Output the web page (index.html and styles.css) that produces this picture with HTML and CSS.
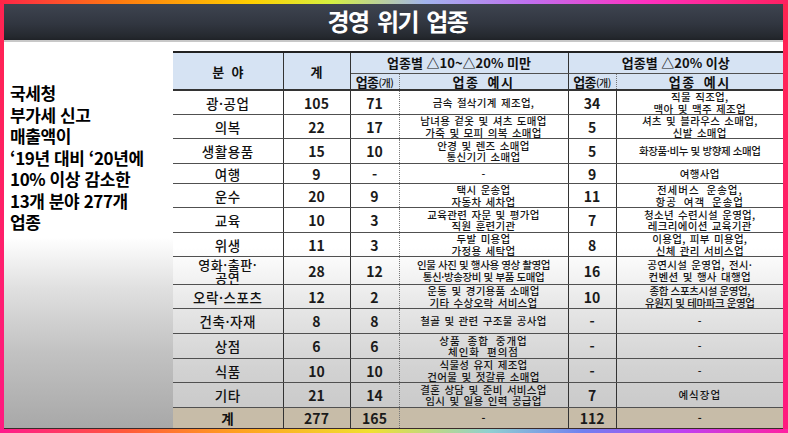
FILE: index.html
```html
<!DOCTYPE html>
<html lang="ko">
<head>
<meta charset="utf-8">
<title>경영 위기 업종</title>
<link rel="stylesheet" href="styles.css">
</head>
<body>
<div class="frame">
  <div class="screen">
    <header class="titlebar"><h1 class="title">경영 위기 업종</h1></header>
    <main class="content">
      <aside class="summary">
        <p>국세청<br>부가세 신고<br>매출액이<br>‘19년 대비 ‘20년에<br>10% 이상 감소한<br>13개 분야 277개<br>업종</p>
      </aside>
      <table class="grid">
        <colgroup>
          <col class="w-field"><col class="w-sum"><col class="w-cnt1"><col class="w-ex1"><col class="w-cnt2"><col class="w-ex2">
        </colgroup>
        <thead>
          <tr class="h1">
            <th rowspan="2" class="hb">분&nbsp;&nbsp;야</th>
            <th rowspan="2" class="hb">계</th>
            <th colspan="2">업종별 △10~△20% 미만</th>
            <th colspan="2" class="last">업종별 △20% 이상</th>
          </tr>
          <tr class="h2">
            <th class="cnt hb">업종<small>(개)</small></th>
            <th class="hb spaced">업종 예시</th>
            <th class="cnt hb">업종<small>(개)</small></th>
            <th class="hb spaced last">업종 예시</th>
          </tr>
        </thead>
        <tbody>
          <tr><td class="field">광·공업</td><td class="num">105</td><td class="num cnt">71</td><td class="ex">금속 절삭기계 제조업,</td><td class="num">34</td><td class="ex last">직물 직조업,<br>맥아 및 맥주 제조업</td></tr>
          <tr><td class="field">의복</td><td class="num">22</td><td class="num cnt">17</td><td class="ex">남녀용 겉옷 및 셔츠 도매업<br>가죽 및 모피 의복 소매업</td><td class="num">5</td><td class="ex last">셔츠 및 블라우스 소매업,<br>신발 소매업</td></tr>
          <tr class="r25"><td class="field">생활용품</td><td class="num">15</td><td class="num cnt">10</td><td class="ex">안경 및 렌즈 소매업<br>통신기기 소매업</td><td class="num">5</td><td class="ex last tight">화장품·비누 및 방향제 소매업</td></tr>
          <tr class="r20"><td class="field">여행</td><td class="num">9</td><td class="num cnt">-</td><td class="ex">-</td><td class="num">9</td><td class="ex last">여행사업</td></tr>
          <tr><td class="field">운수</td><td class="num">20</td><td class="num cnt">9</td><td class="ex">택시 운송업<br>자동차 세차업</td><td class="num">11</td><td class="ex last wide">전세버스 운송업,<br>항공 여객 운송업</td></tr>
          <tr class="r25"><td class="field">교육</td><td class="num">10</td><td class="num cnt">3</td><td class="ex">교육관련 자문 및 평가업<br>직원 훈련기관</td><td class="num">7</td><td class="ex last">청소년 수련시설 운영업,<br>레크리에이션 교육기관</td></tr>
          <tr><td class="field">위생</td><td class="num">11</td><td class="num cnt">3</td><td class="ex">두발 미용업<br>가정용 세탁업</td><td class="num">8</td><td class="ex last">이용업, 피부 미용업,<br>신체 관리 서비스업</td></tr>
          <tr class="r28"><td class="field two">영화·출판·<br>공연</td><td class="num">28</td><td class="num cnt">12</td><td class="ex tight">인물 사진 및 행사용 영상 촬영업<br>통신·방송장비 및 부품 도매업</td><td class="num">16</td><td class="ex last">공연시설 운영업, 전시·<br>컨벤션 및 행사 대행업</td></tr>
          <tr><td class="field">오락·스포츠</td><td class="num">12</td><td class="num cnt">2</td><td class="ex">운동 및 경기용품 소매업<br>기타 수상오락 서비스업</td><td class="num">10</td><td class="ex last tight">종합 스포츠시설 운영업,<br>유원지 및 테마파크 운영업</td></tr>
          <tr class="r25"><td class="field">건축·자재</td><td class="num">8</td><td class="num cnt">8</td><td class="ex">철골 및 관련 구조물 공사업</td><td class="num">-</td><td class="ex last">-</td></tr>
          <tr class="r25"><td class="field">상점</td><td class="num">6</td><td class="num cnt">6</td><td class="ex wide">상품 종합 중개업<br>체인화 편의점</td><td class="num">-</td><td class="ex last">-</td></tr>
          <tr><td class="field">식품</td><td class="num">10</td><td class="num cnt">10</td><td class="ex">식물성 유지 제조업<br>건어물 및 젓갈류 소매업</td><td class="num">-</td><td class="ex last">-</td></tr>
          <tr class="r25"><td class="field">기타</td><td class="num">21</td><td class="num cnt">14</td><td class="ex">결혼 상담 및 준비 서비스업<br>임시 및 일용 인력 공급업</td><td class="num">7</td><td class="ex last wide">예식장업</td></tr>
          <tr class="total"><td class="field">계</td><td class="num">277</td><td class="num cnt">165</td><td class="ex">-</td><td class="num">112</td><td class="ex last">-</td></tr>
        </tbody>
      </table>
    </main>
  </div>
</div>
</body>
</html>
```
FILE: styles.css
```css
html, body {
  margin: 0;
  padding: 0;
}

body {
  width: 788px;
  height: 433px;
  overflow: hidden;
  font-family: "Noto Sans CJK KR", "Noto Sans", sans-serif;
}

.frame {
  width: 788px;
  height: 433px;
  box-sizing: border-box;
  padding: 4px 5px 4px 4px;
  background:
    linear-gradient(90deg, #ff2448 0%, #ff7a10 15%, #ffcf00 32%, #d6f040 42%, #a2b4ee 54%, #c070f0 67%, #ff30c0 82%, #ff2060 100%) top / 100% 4px no-repeat,
    linear-gradient(90deg, #ff1a8c 0%, #ff5a3a 16%, #ffa020 30%, #f0e030 47%, #90d0d0 62%, #7080f0 74%, #c040f0 87%, #ff20a0 100%) bottom / 100% 4px no-repeat,
    linear-gradient(180deg, #ff2450 0%, #ff1a80 100%);
}

.screen {
  height: 100%;
  display: flex;
  flex-direction: column;
  overflow: hidden;
  border-bottom: 1px solid #3a2a2a;
  box-sizing: border-box;
  background: linear-gradient(180deg, #fff 0%, #fff 55%, #e0e0e0 67%, #c2c2c2 82%, #a8a8a8 100%);
}

.titlebar {
  flex: none;
  height: 38px;
  box-sizing: border-box;
  padding: 0 0 3px 8px;
  display: flex;
  align-items: center;
  justify-content: center;
  background: linear-gradient(180deg, #3e4450 0%, #313640 55%, #25292f 90%, #1f2227 100%);
  border-bottom: 2px solid #c8c8c8;
}

.title {
  margin: 0;
  color: #fff;
  font: 700 24px/35px "Noto Sans CJK KR", sans-serif;
  letter-spacing: -1.5px;
  word-spacing: 3px;
}

.content {
  flex: 1;
  display: flex;
  align-items: flex-start;
}

.summary {
  flex: none;
  width: 169px;
  box-sizing: border-box;
  padding: 40px 0 0 6px;
  font: 700 17px/21.5px "Noto Sans CJK KR", sans-serif;
  color: #000;
  letter-spacing: -0.4px;
}

.summary p {
  margin: 0;
}

.grid {
  flex: none;
  margin-top: 9px;
  width: 610px;
  table-layout: fixed;
  border-collapse: collapse;
  border-top: 2px solid #222;
  border-bottom: 1px solid #333;
  color: #141414;
  background: linear-gradient(180deg, #fff 0%, #fff 52%, #e6e6e6 68%, #d2d2d2 84%, #c6c6c6 100%);
}

.w-field { width: 110px; }
.w-sum { width: 67px; }
.w-cnt1 { width: 49px; }
.w-ex1 { width: 169px; }
.w-cnt2 { width: 48px; }
.w-ex2 { width: 167px; }

.grid th,
.grid td {
  padding: 0;
  text-align: center;
  vertical-align: middle;
  white-space: nowrap;
  border-right: 1px solid #333;
  border-bottom: 1px solid #505050;
}

.grid .last {
  border-right: none;
}

.grid th {
  background: #d6e3f3;
  font: 700 13px/1 "Noto Sans CJK KR", sans-serif;
  color: #111;
}

.grid th small {
  font-size: 10px;
  font-weight: 500;
}

.grid .spaced {
  letter-spacing: 1.5px;
  word-spacing: 3px;
}

.grid .hb {
  border-bottom: 2px solid #333;
}

.h1 { height: 21px; }
.h2 { height: 17px; }

.grid th.cnt,
.grid td.cnt {
  border-right: 1px dotted #777;
}

.grid th.cnt {
  letter-spacing: -0.5px;
}

.grid tbody tr {
  height: 24px;
}

.grid tbody tr.r20 { height: 20px; }
.grid tbody tr.r25 { height: 25px; }
.grid tbody tr.r28 { height: 28px; }

.field {
  font: 500 13.5px/16px "Noto Sans CJK KR", sans-serif;
  letter-spacing: 0.6px;
  color: #111;
}

.field.two {
  font-size: 13px;
  line-height: 13px;
}

.num {
  font: 700 14px/16px "Noto Sans CJK KR", sans-serif;
  color: #1a1a1a;
}

.ex {
  font: 500 10.5px/11.5px "Noto Sans CJK KR", sans-serif;
  letter-spacing: 0.3px;
  word-spacing: 1px;
  color: #151515;
}

.ex.tight {
  letter-spacing: -0.4px;
  word-spacing: 0;
}

.ex.wide {
  letter-spacing: 1px;
  word-spacing: 3px;
}

.grid tr.total {
  height: 21px;
}

.grid tr.total td {
  background: #c7bca8;
  font-weight: 700;
  border-bottom: 1px solid #333;
}
```
